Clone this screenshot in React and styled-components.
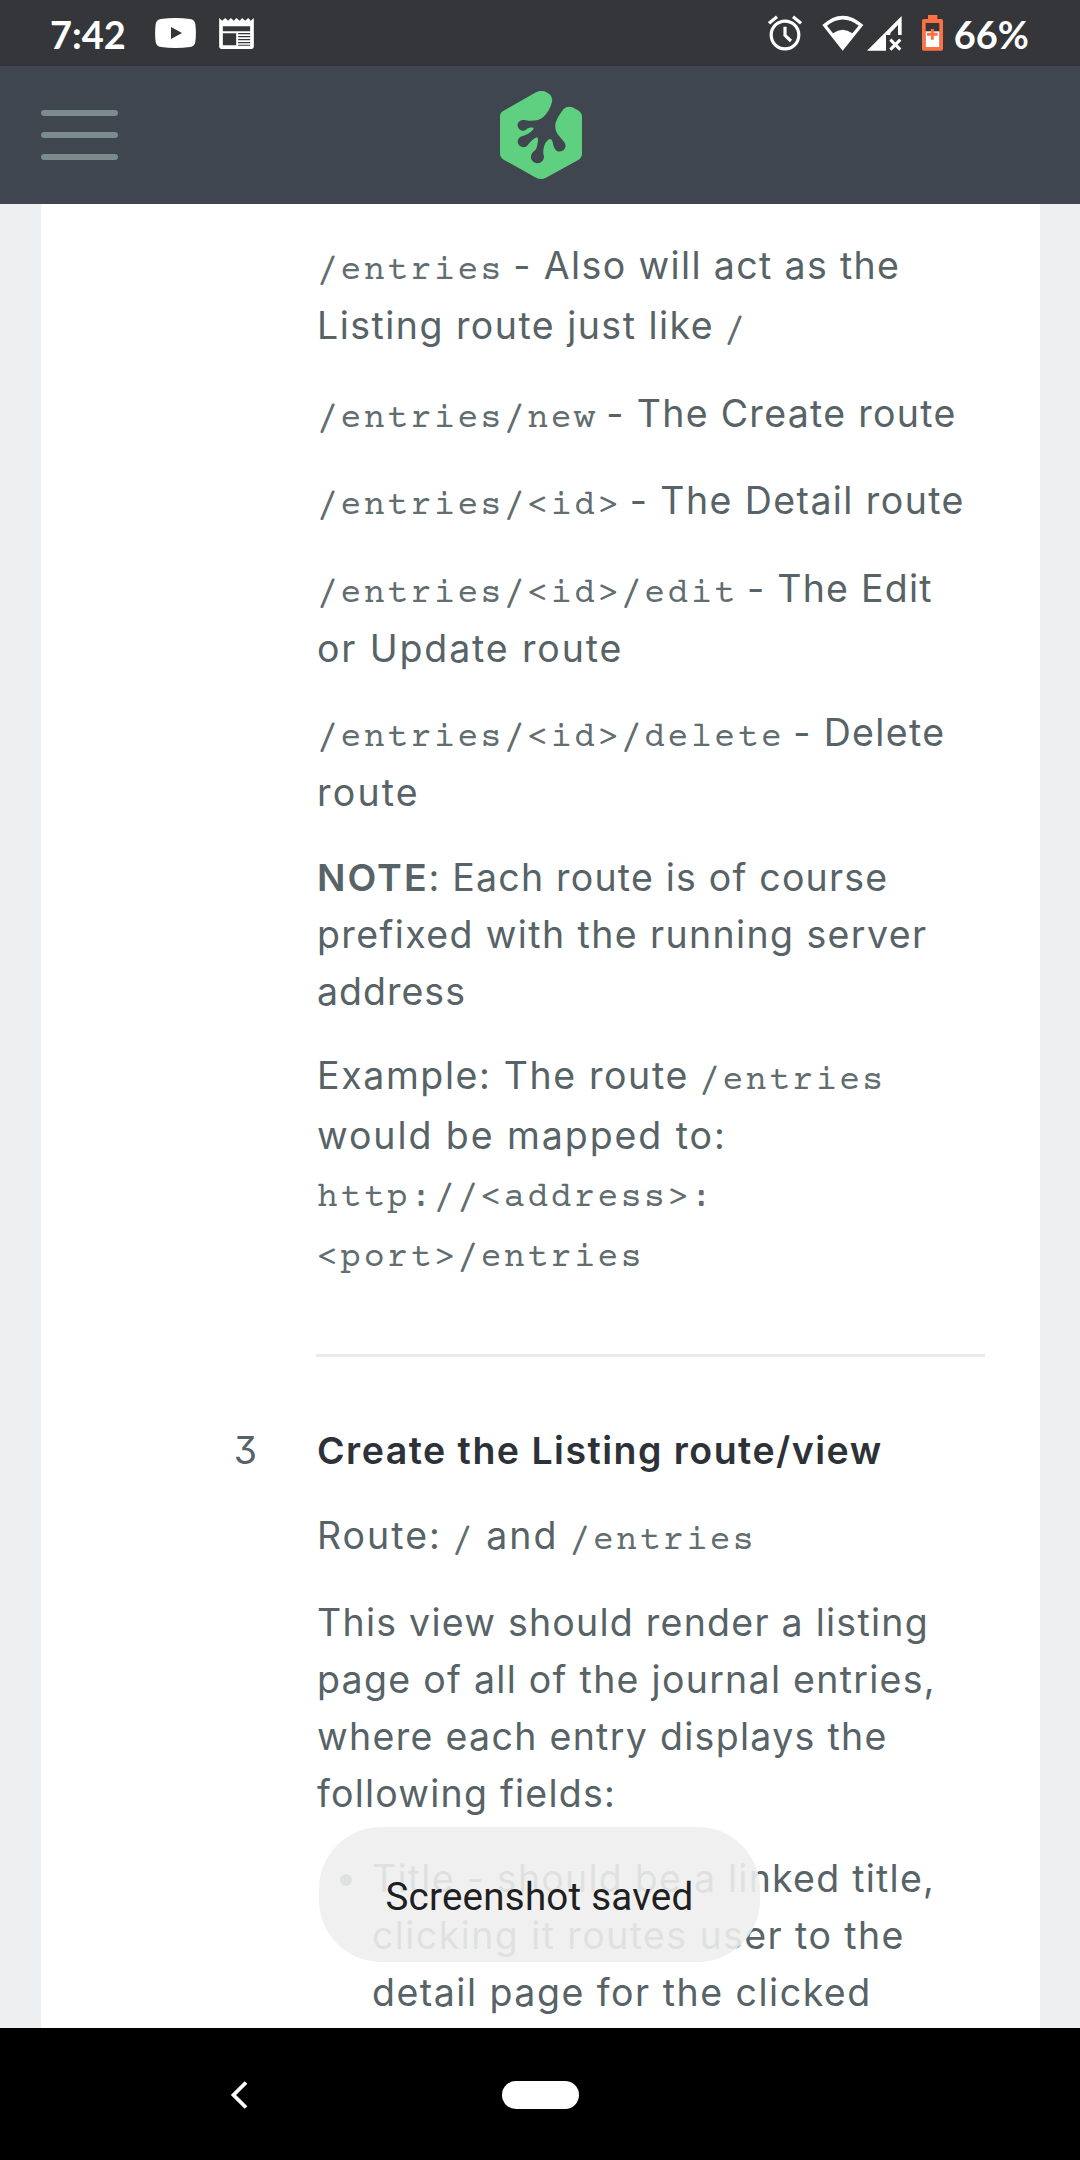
import React from 'react';
import styled, { createGlobalStyle } from 'styled-components';

const GlobalStyle = createGlobalStyle`
  * { box-sizing: border-box; }
  body { margin: 0; background: #000; font-family: Inter, "Liberation Sans", sans-serif; }
`;

const Phone = styled.div`
  position: relative;
  display: flex;
  flex-direction: column;
  width: 1080px;
  height: 2160px;
  overflow: hidden;
`;

const StatusBar = styled.header`
  display: flex;
  align-items: center;
  flex: 0 0 66px;
  padding: 0 51px 0 50px;
  background: #35363a;
`;

const StatusText = styled.span`
  font: 700 38px/60px Lato, "Liberation Sans", sans-serif;
  color: #fff;
  margin-left: ${p => p.$gap || 0}px;
  padding-top: 1px;
`;

const Icon = styled.svg`
  flex: none;
  display: block;
  margin-left: ${p => p.$gap || 0}px;
`;

const Spacer = styled.div`
  flex: 1;
`;

const TopBar = styled.nav`
  display: grid;
  grid-template-columns: 1fr auto 1fr;
  align-items: center;
  flex: 0 0 138px;
  padding: 0 40px 0 41px;
  background: #3f464f;
`;

const MenuButton = styled.button`
  display: flex;
  flex-direction: column;
  gap: 16px;
  width: 77px;
  padding: 0;
  border: 0;
  background: none;
`;

const MenuBar = styled.span`
  height: 6px;
  border-radius: 3px;
  background: #7b8b8e;
`;

const Page = styled.main`
  flex: 1;
  min-height: 0;
  overflow: hidden;
  padding: 0 40px 0 41px;
  background: #edeff0;
`;

const Sheet = styled.div`
  height: 100%;
  padding: 33px 55px 0 0;
  background: #fff;
`;

const Step = styled.section`
  display: grid;
  grid-template-columns: 275px 1fr;
`;

const StepNumber = styled.div`
  padding-right: 59px;
  text-align: right;
  font-size: 37.5px;
  line-height: 57px;
  font-feature-settings: "cv09";
  color: #576366;
`;

const StepBody = styled.div`
  display: flex;
  flex-direction: column;
  gap: 27.5px;
  padding-left: 1px;
  padding-bottom: ${p => (p.$last ? 0 : 70)}px;
  border-bottom: ${p => (p.$last ? 0 : 3)}px solid #e8ecee;
  margin-bottom: ${p => (p.$last ? 0 : 65)}px;
`;

const Paragraph = styled.p`
  margin: 0;
  font-size: 37.5px;
  line-height: 57px;
  color: #576366;
`;

const Heading = styled.h3`
  margin: 0;
  font-size: 37.5px;
  font-weight: 600;
  line-height: 57px;
  letter-spacing: 1.48px;
  white-space: pre;
  color: #2c3238;
`;

const Line = styled.span`
  display: block;
  height: ${p => (p.$code ? 60 : 57)}px;
  white-space: pre;
`;

const Text = styled.span`
  letter-spacing: ${p => p.$ls}px;
  margin-left: ${p => p.$ml || 0}px;
`;

const Strong = styled.strong`
  font-weight: 600;
  letter-spacing: 2px;
`;

const Code = styled.code`
  font-family: "Courier Prime", "Liberation Mono", monospace;
  font-size: 35px;
  line-height: 1;
  letter-spacing: 2.37px;
  color: #626d70;
  margin-left: ${p => p.$ml || 0}px;
`;

const List = styled.ul`
  margin: 0;
  padding: 0 0 0 55px;
  font-size: 37.5px;
  line-height: 57px;
  color: #576366;
  list-style: none;
`;

const Item = styled.li`
  &::before {
    content: "";
    float: left;
    width: 12px;
    height: 12px;
    margin: 24px 0 0 -32px;
    border-radius: 50%;
    background: currentColor;
  }
`;

const Toast = styled.div`
  position: absolute;
  left: 319px;
  top: 1827px;
  width: 441px;
  height: 135px;
  border-radius: 62px;
  background: rgba(238, 238, 238, 0.9);
  color: #202020;
  font: 400 38.5px/135px Roboto, sans-serif;
  letter-spacing: 0.25px;
  text-align: center;
  padding-top: 2px;
`;

const NavBar = styled.footer`
  display: grid;
  grid-template-columns: 1fr 77px 1fr;
  align-items: center;
  flex: 0 0 132px;
  padding: 1px 0 0 1px;
  background: #000;
`;

const BackIcon = styled.svg`
  display: block;
  margin-left: 229px;
`;

const HomePill = styled.div`
  height: 28px;
  border-radius: 14px;
  background: #fff;
`;

const Logo = () => (
  <svg width="82" height="88" viewBox="120 63 246 264">
    <path
      fill="#5fcf80"
      d="M228 67Q243 59 258 66L268 72Q279 80 276 95C272 113 262 130 250 141C240 151 222 153 205 152C200 151 196 150 188 150A16 16 0 1 0 198 179C206 172 216 172 221 174C222 178 208 192 188 198A17 17 0 1 0 203 226C210 216 222 204 231 202C236 204 235 220 228 238L222 244A19.500 19.500 0 1 0 250 252C249 232 256 212 269 207C279 208 278 220 282 231A17.500 17.500 0 1 0 314 218C308 210 300 202 295 195C286 184 284 168 287 158C292 142 302 128 311 117Q322 107 338 112L356 122Q366 129 366 140V252Q366 262 356 269L258 323Q243 331 228 323L131 269Q120 262 120 252V138Q120 128 131 122Z"
    />
  </svg>
);

const VideoIcon = () => (
  <Icon $gap={29} width="41" height="30" viewBox="0 0 41 30">
    <path fill="#fff" fillRule="evenodd" d="M6 1Q20.500-.800 35 1Q39.500 1.500 40.300 6Q41.500 15 40.300 24Q39.500 28.500 35 29Q20.500 30.800 6 29Q1.500 28.500.700 24Q-.500 15 .700 6Q1.500 1.500 6 1ZM16 9V21L27 15Z" />
  </Icon>
);

const NewsIcon = () => (
  <Icon $gap={23} width="35" height="31" viewBox="657 54 104 93">
    <path fill="#fff" fillRule="evenodd" d="M657 54L666 62L675 54L684 62L692 54L701 62L709 54L718 62L726 54L735 62L744 54L752 62L761 54V139Q761 147 753 147H665Q657 147 657 139ZM668 79V94H750V79ZM668 100V136H708V100ZM714 99V103H750V99ZM714 108V112H750V108ZM714 117V121H750V117ZM714 126V130H750V126ZM714 134V137H750V134Z" />
  </Icon>
);

const AlarmIcon = () => (
  <Icon width="34" height="36" viewBox="148 43 102 108">
    <g fill="none" stroke="#fff" strokeWidth="9.500">
      <circle cx="199" cy="103" r="41.500" />
      <path d="M199 78V104L217 121M151 68L175 48M223 48L247 68" />
    </g>
  </Icon>
);

const WifiIcon = () => (
  <Icon $gap={20} width="42" height="36" viewBox="308 43 126 108">
    <path fill="#fff" fillRule="evenodd" d="M309 73Q370 17 432 73L370 150ZM323 75L341 98Q370 76 399 98L418 75Q370 38 323 75Z" />
  </Icon>
);

const SignalIcon = () => (
  <Icon $gap={3} width="35" height="36" viewBox="442 43 105 108">
    <path fill="#fff" d="M546 46V103H535V73L512 97V103H499V150H442Z" />
    <path stroke="#fff" strokeWidth="9" d="M512 117L542 147M542 117L512 147" />
  </Icon>
);

const BatteryIcon = () => (
  <Icon $gap={20} width="21" height="36" viewBox="606 45 63 108">
    <path fill="#ff7043" fillRule="evenodd" d="M624 45H652V57H664Q669 57 669 62V147Q669 152 664 152H611Q606 152 606 147V62Q606 57 611 57H624ZM617 69V141H658V69Z" />
    <path fill="#fff" d="M617 94H658V141H617Z" />
    <path stroke="#ff7043" strokeWidth="9" d="M621 103H653M637 87V119" />
  </Icon>
);

export default function App() {
  return (
    <Phone>
      <GlobalStyle />
      <StatusBar>
        <StatusText>7:42</StatusText>
        <VideoIcon />
        <NewsIcon />
        <Spacer />
        <AlarmIcon />
        <WifiIcon />
        <SignalIcon />
        <BatteryIcon />
        <StatusText $gap={11}>66%</StatusText>
      </StatusBar>
      <TopBar>
        <MenuButton aria-label="Menu">
          <MenuBar />
          <MenuBar />
          <MenuBar />
        </MenuButton>
        <Logo />
      </TopBar>
      <Page>
        <Sheet>
          <Step>
            <StepNumber />
            <StepBody>
              <Paragraph>
                <Line $code><Code>/entries</Code><Text $ls={1.36} $ml={9.5}>- Also will act as the</Text></Line>
                <Line $code><Text $ls={1.47}>Listing route just like</Text><Code $ml={10}>/</Code></Line>
              </Paragraph>
              <Paragraph>
                <Line $code><Code>/entries/new</Code><Text $ls={1.3} $ml={9}>- The Create route</Text></Line>
              </Paragraph>
              <Paragraph>
                <Line $code><Code>/entries/&lt;id&gt;</Code><Text $ls={1.42} $ml={9}>- The Detail route</Text></Line>
              </Paragraph>
              <Paragraph>
                <Line $code><Code>/entries/&lt;id&gt;/edit</Code><Text $ls={1.24} $ml={9.5}>- The Edit</Text></Line>
                <Line><Text $ls={1.86}>or Update route</Text></Line>
              </Paragraph>
              <Paragraph>
                <Line $code><Code>/entries/&lt;id&gt;/delete</Code><Text $ls={1.35} $ml={9}>- Delete</Text></Line>
                <Line><Text $ls={2.2}>route</Text></Line>
              </Paragraph>
              <Paragraph>
                <Line><Strong>NOTE</Strong><Text $ls={1.2}>: Each route is of course</Text></Line>
                <Line><Text $ls={1.39}>prefixed with the running server</Text></Line>
                <Line><Text $ls={1}>address</Text></Line>
              </Paragraph>
              <Paragraph>
                <Line $code><Text $ls={1.61}>Example: The route</Text><Code $ml={10}>/entries</Code></Line>
                <Line><Text $ls={1.93}>would be mapped to:</Text></Line>
                <Line $code><Code>http://&lt;address&gt;:</Code></Line>
                <Line $code><Code>&lt;port&gt;/entries</Code></Line>
              </Paragraph>
            </StepBody>
          </Step>
          <Step>
            <StepNumber>3</StepNumber>
            <StepBody $last>
              <Heading>Create the Listing route/view</Heading>
              <Paragraph>
                <Line $code><Text $ls={2}>Route:</Text><Code $ml={10}>/</Code><Text $ls={2} $ml={11}>and</Text><Code $ml={11}>/entries</Code></Line>
              </Paragraph>
              <Paragraph>
                <Line><Text $ls={1.25}>This view should render a listing</Text></Line>
                <Line><Text $ls={1.28}>page of all of the journal entries,</Text></Line>
                <Line><Text $ls={1.31}>where each entry displays the</Text></Line>
                <Line><Text $ls={1.22}>following fields:</Text></Line>
              </Paragraph>
              <List>
                <Item>
                  <Line><Text $ls={1.25}>Title - should be a linked title,</Text></Line>
                  <Line><Text $ls={1.42}>clicking it routes user to the</Text></Line>
                  <Line><Text $ls={1.5}>detail page for the clicked</Text></Line>
                </Item>
              </List>
            </StepBody>
          </Step>
        </Sheet>
      </Page>
      <NavBar>
        <BackIcon width="18" height="28" viewBox="0 0 18 28">
          <path fill="none" stroke="#fff" strokeWidth="3.800" d="M16 1.500L3.500 14L16 26.500" />
        </BackIcon>
        <HomePill />
      </NavBar>
      <Toast>Screenshot saved</Toast>
    </Phone>
  );
}
